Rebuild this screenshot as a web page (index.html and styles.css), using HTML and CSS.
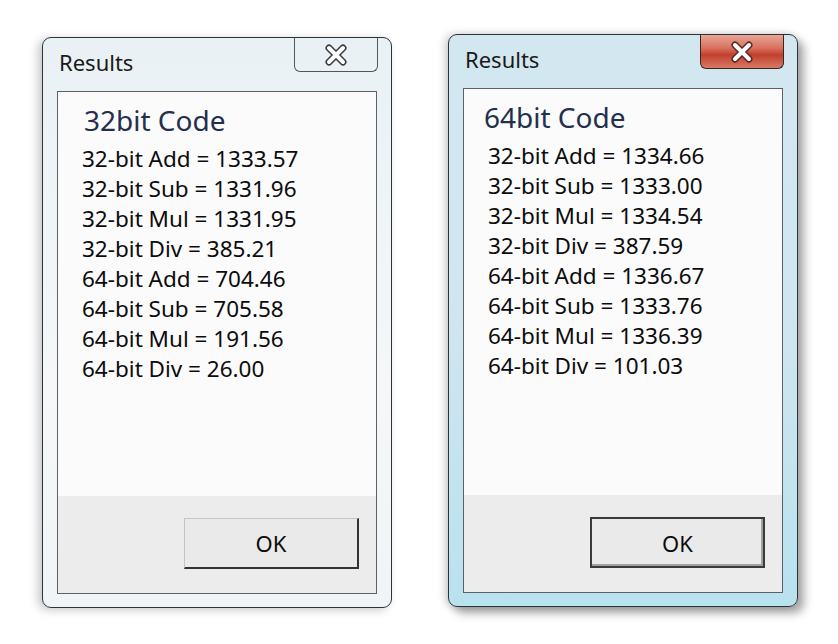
FILE: index.html
```html
<!DOCTYPE html>
<html lang="en">
<head>
  <meta charset="UTF-8" />
  <title>Results</title>
  <link rel="stylesheet" href="styles.css">
</head>
<body>

  <div class="desk">

    <div class="window inactive">
      <div class="titlebar">
        <span class="title">Results</span>
        <button class="close" aria-label="Close">
          <svg width="30" height="22" viewBox="0 0 30 22">
            <path d="M8 4 L22 18 M22 4 L8 18" stroke="#3a3a3a" stroke-width="7" stroke-linecap="round" />
            <path d="M8 4 L22 18 M22 4 L8 18" stroke="#fff" stroke-width="4" stroke-linecap="round" />
          </svg>
        </button>
      </div>
      <div class="client">
        <div class="content">
          <div class="heading">32bit Code</div>
          <div class="line">32-bit Add = 1333.57</div>
          <div class="line">32-bit Sub = 1331.96</div>
          <div class="line">32-bit Mul = 1331.95</div>
          <div class="line">32-bit Div = 385.21</div>
          <div class="line">64-bit Add = 704.46</div>
          <div class="line">64-bit Sub = 705.58</div>
          <div class="line">64-bit Mul = 191.56</div>
          <div class="line">64-bit Div = 26.00</div>
        </div>
        <div class="footer">
          <button class="ok">OK</button>
        </div>
      </div>
    </div>

    <div class="window active">
      <div class="titlebar">
        <span class="title">Results</span>
        <button class="close" aria-label="Close">
          <svg width="30" height="22" viewBox="0 0 30 22">
            <path d="M8 4 L22 18 M22 4 L8 18" stroke="#5a2a22" stroke-width="7" stroke-linecap="round" />
            <path d="M8 4 L22 18 M22 4 L8 18" stroke="#fff" stroke-width="4" stroke-linecap="round" />
          </svg>
        </button>
      </div>
      <div class="client">
        <div class="content">
          <div class="heading">64bit Code</div>
          <div class="line">32-bit Add = 1334.66</div>
          <div class="line">32-bit Sub = 1333.00</div>
          <div class="line">32-bit Mul = 1334.54</div>
          <div class="line">32-bit Div = 387.59</div>
          <div class="line">64-bit Add = 1336.67</div>
          <div class="line">64-bit Sub = 1333.76</div>
          <div class="line">64-bit Mul = 1336.39</div>
          <div class="line">64-bit Div = 101.03</div>
        </div>
        <div class="footer">
          <button class="ok">OK</button>
        </div>
      </div>
    </div>

  </div>

</body>
</html>
```

FILE: styles.css
```css
:root {
  --ink: #0c0c0c;
  --navy: #22304e;
  --edge: #2e3338;
  --panel: #ececec;
}

html, body {
  margin: 0;
  height: 100%;
  background: #fff;
  font-family: 'Noto Sans', 'Open Sans', sans-serif;
  color: var(--ink);
}

.desk {
  display: flex;
  align-items: flex-start;
  gap: 56px;
  padding: 34px 0 0 42px;
}

.window {
  box-sizing: border-box;
  width: 350px;
  height: 573px;
  border: 1px solid var(--edge);
  border-radius: 9px;
  padding: 0 14px 13px;
  display: flex;
  flex-direction: column;
}

.inactive {
  margin-top: 3px;
  height: 571px;
  background: linear-gradient(#e9f1f5, #f5f7f8 60%, #f1f4f6);
  box-shadow: -4px 2px 10px rgba(0, 0, 0, 0.22);
}

.active {
  background: linear-gradient(#d3e7f1, #cfe6f0 50%, #b8e2ee);
  box-shadow: 6px 6px 10px rgba(0, 0, 0, 0.35), -3px 0 8px rgba(0, 0, 0, 0.2);
}

.titlebar {
  height: 53px;
  flex-shrink: 0;
  display: flex;
  justify-content: space-between;
  align-items: flex-start;
}

.title {
  font-size: 22px;
  padding: 9px 0 0 2px;
  color: #1a1a1a;
}

.close {
  width: 84px;
  height: 34px;
  margin-right: -1px;
  border: 1px solid #555;
  border-top: none;
  border-radius: 0 0 6px 6px;
  background: transparent;
  display: flex;
  align-items: center;
  justify-content: center;
  padding: 0;
}

.active .close {
  border-color: #3a2520;
  background: linear-gradient(#e9a595, #d8705e 40%, #c0402c 60%, #d77a66);
}

.client {
  flex: 1;
  border: 1px solid #5d6166;
  display: flex;
  flex-direction: column;
  background: var(--panel);
}

.content {
  flex: 1;
  background: #fbfbfb;
  padding: 9px 0 0 24px;
}

.heading {
  font-size: 28px;
  color: var(--navy);
  padding-left: 2px;
  margin-bottom: 5px;
}

.active .heading {
  padding-left: 0;
  margin-left: -4px;
}

.line {
  font-size: 22.5px;
  line-height: 30px;
}

.footer {
  height: 97px;
  flex-shrink: 0;
  display: flex;
  justify-content: flex-end;
  align-items: flex-start;
  padding: 22px 17px 0 0;
  box-sizing: border-box;
}

.ok {
  width: 175px;
  height: 51px;
  font-family: inherit;
  font-size: 22px;
  color: var(--ink);
  background: #eaeaea;
  border: 1px solid #c4c4c4;
  border-right: 2px solid #333;
  border-bottom: 2px solid #333;
  padding: 0;
}

.active .ok {
  border: 2px solid #3a3a3a;
  box-shadow: inset -2px -2px 0 #a0a0a0;
}
```
